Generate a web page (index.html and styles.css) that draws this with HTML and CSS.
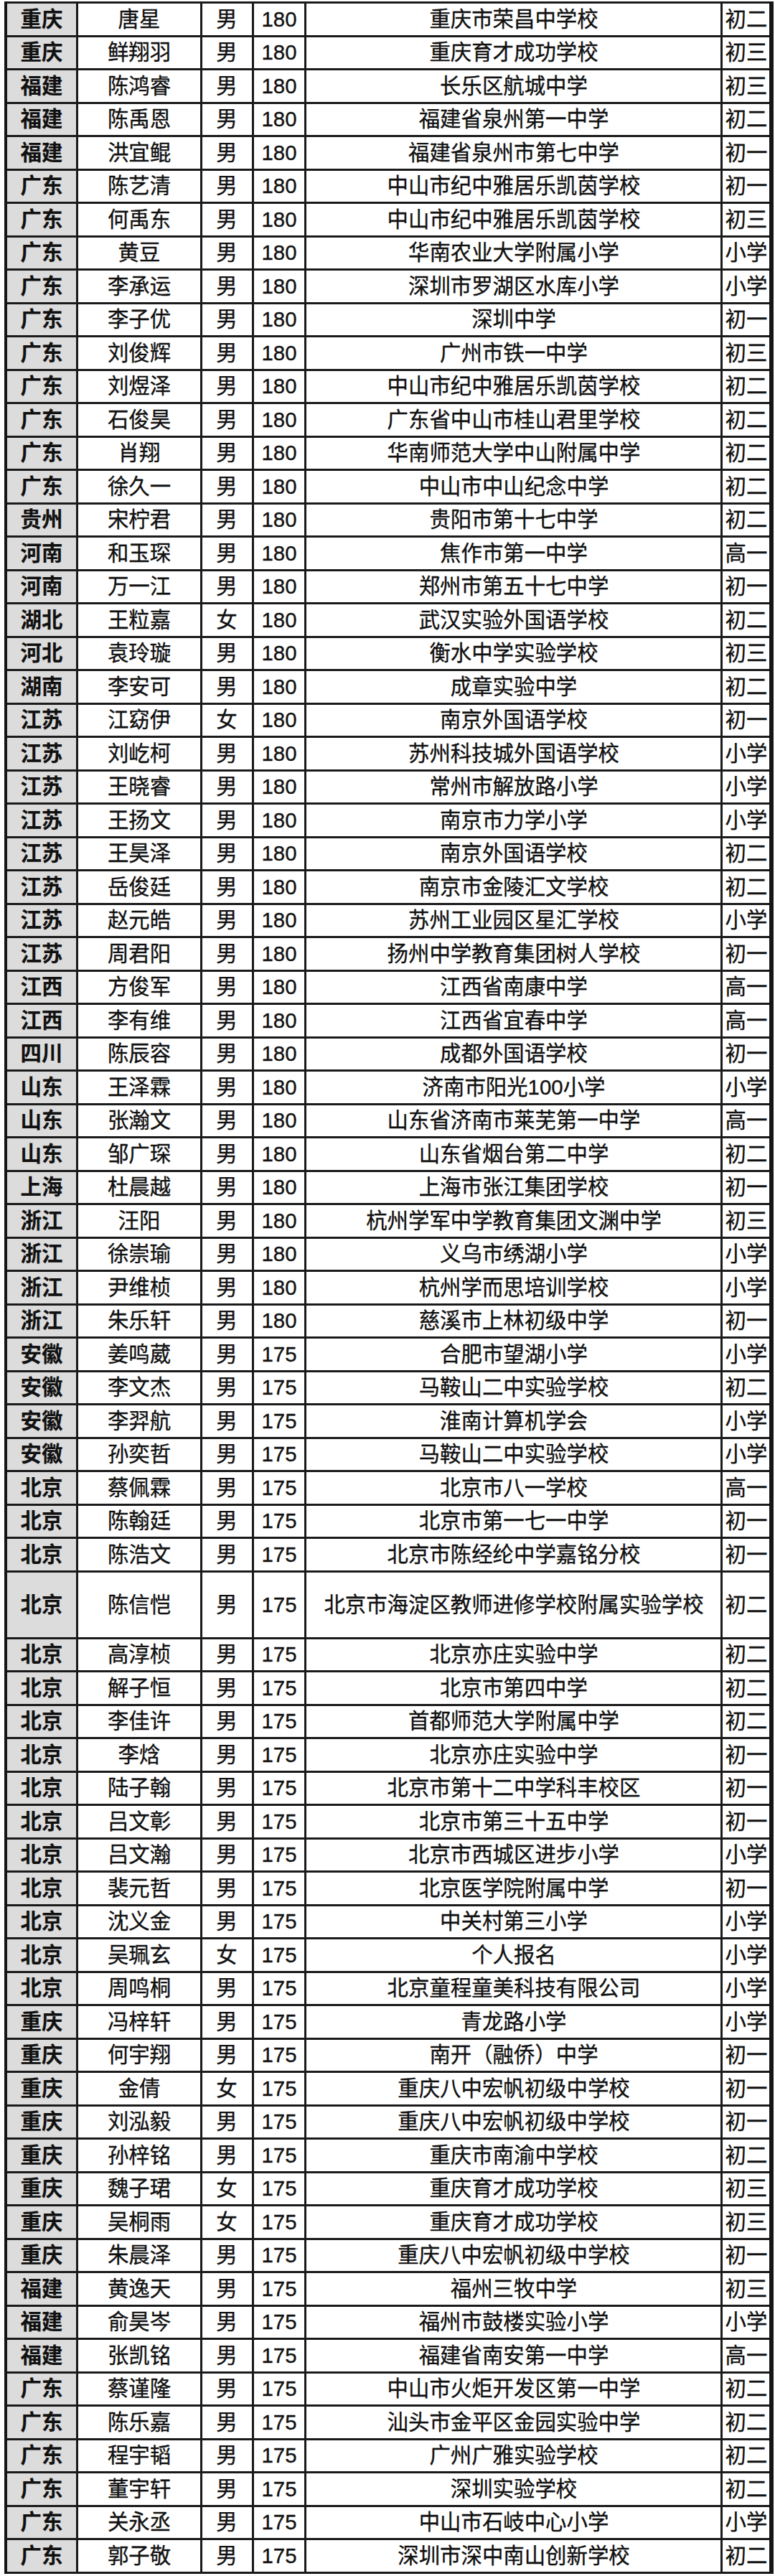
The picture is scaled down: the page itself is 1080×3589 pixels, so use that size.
FILE: index.html
```html
<!DOCTYPE html>
<html lang="zh-CN">
<head>
<meta charset="utf-8">
<title>成绩名单</title>
<link rel="stylesheet" href="styles.css">
</head>
<body>
<table class="rank">
<colgroup>
<col class="c-prov"><col class="c-name"><col class="c-sex"><col class="c-score"><col class="c-school"><col class="c-grade">
</colgroup>
<tbody>
<tr><td class="prov"><span class="t">重庆</span></td><td><span class="t">唐星</span></td><td><span class="t">男</span></td><td><span class="t">180</span></td><td><span class="t">重庆市荣昌中学校</span></td><td><span class="t">初二</span></td></tr>
<tr><td class="prov"><span class="t">重庆</span></td><td><span class="t">鲜翔羽</span></td><td><span class="t">男</span></td><td><span class="t">180</span></td><td><span class="t">重庆育才成功学校</span></td><td><span class="t">初三</span></td></tr>
<tr><td class="prov"><span class="t">福建</span></td><td><span class="t">陈鸿睿</span></td><td><span class="t">男</span></td><td><span class="t">180</span></td><td><span class="t">长乐区航城中学</span></td><td><span class="t">初三</span></td></tr>
<tr><td class="prov"><span class="t">福建</span></td><td><span class="t">陈禹恩</span></td><td><span class="t">男</span></td><td><span class="t">180</span></td><td><span class="t">福建省泉州第一中学</span></td><td><span class="t">初二</span></td></tr>
<tr><td class="prov"><span class="t">福建</span></td><td><span class="t">洪宜鲲</span></td><td><span class="t">男</span></td><td><span class="t">180</span></td><td><span class="t">福建省泉州市第七中学</span></td><td><span class="t">初一</span></td></tr>
<tr><td class="prov"><span class="t">广东</span></td><td><span class="t">陈艺清</span></td><td><span class="t">男</span></td><td><span class="t">180</span></td><td><span class="t">中山市纪中雅居乐凯茵学校</span></td><td><span class="t">初一</span></td></tr>
<tr><td class="prov"><span class="t">广东</span></td><td><span class="t">何禹东</span></td><td><span class="t">男</span></td><td><span class="t">180</span></td><td><span class="t">中山市纪中雅居乐凯茵学校</span></td><td><span class="t">初三</span></td></tr>
<tr><td class="prov"><span class="t">广东</span></td><td><span class="t">黄豆</span></td><td><span class="t">男</span></td><td><span class="t">180</span></td><td><span class="t">华南农业大学附属小学</span></td><td><span class="t">小学</span></td></tr>
<tr><td class="prov"><span class="t">广东</span></td><td><span class="t">李承运</span></td><td><span class="t">男</span></td><td><span class="t">180</span></td><td><span class="t">深圳市罗湖区水库小学</span></td><td><span class="t">小学</span></td></tr>
<tr><td class="prov"><span class="t">广东</span></td><td><span class="t">李子优</span></td><td><span class="t">男</span></td><td><span class="t">180</span></td><td><span class="t">深圳中学</span></td><td><span class="t">初一</span></td></tr>
<tr><td class="prov"><span class="t">广东</span></td><td><span class="t">刘俊辉</span></td><td><span class="t">男</span></td><td><span class="t">180</span></td><td><span class="t">广州市铁一中学</span></td><td><span class="t">初三</span></td></tr>
<tr><td class="prov"><span class="t">广东</span></td><td><span class="t">刘煜泽</span></td><td><span class="t">男</span></td><td><span class="t">180</span></td><td><span class="t">中山市纪中雅居乐凯茵学校</span></td><td><span class="t">初二</span></td></tr>
<tr><td class="prov"><span class="t">广东</span></td><td><span class="t">石俊昊</span></td><td><span class="t">男</span></td><td><span class="t">180</span></td><td><span class="t">广东省中山市桂山君里学校</span></td><td><span class="t">初二</span></td></tr>
<tr><td class="prov"><span class="t">广东</span></td><td><span class="t">肖翔</span></td><td><span class="t">男</span></td><td><span class="t">180</span></td><td><span class="t">华南师范大学中山附属中学</span></td><td><span class="t">初二</span></td></tr>
<tr><td class="prov"><span class="t">广东</span></td><td><span class="t">徐久一</span></td><td><span class="t">男</span></td><td><span class="t">180</span></td><td><span class="t">中山市中山纪念中学</span></td><td><span class="t">初二</span></td></tr>
<tr><td class="prov"><span class="t">贵州</span></td><td><span class="t">宋柠君</span></td><td><span class="t">男</span></td><td><span class="t">180</span></td><td><span class="t">贵阳市第十七中学</span></td><td><span class="t">初二</span></td></tr>
<tr><td class="prov"><span class="t">河南</span></td><td><span class="t">和玉琛</span></td><td><span class="t">男</span></td><td><span class="t">180</span></td><td><span class="t">焦作市第一中学</span></td><td><span class="t">高一</span></td></tr>
<tr><td class="prov"><span class="t">河南</span></td><td><span class="t">万一江</span></td><td><span class="t">男</span></td><td><span class="t">180</span></td><td><span class="t">郑州市第五十七中学</span></td><td><span class="t">初一</span></td></tr>
<tr><td class="prov"><span class="t">湖北</span></td><td><span class="t">王粒嘉</span></td><td><span class="t">女</span></td><td><span class="t">180</span></td><td><span class="t">武汉实验外国语学校</span></td><td><span class="t">初二</span></td></tr>
<tr><td class="prov"><span class="t">河北</span></td><td><span class="t">袁玲璇</span></td><td><span class="t">男</span></td><td><span class="t">180</span></td><td><span class="t">衡水中学实验学校</span></td><td><span class="t">初三</span></td></tr>
<tr><td class="prov"><span class="t">湖南</span></td><td><span class="t">李安可</span></td><td><span class="t">男</span></td><td><span class="t">180</span></td><td><span class="t">成章实验中学</span></td><td><span class="t">初二</span></td></tr>
<tr><td class="prov"><span class="t">江苏</span></td><td><span class="t">江窈伊</span></td><td><span class="t">女</span></td><td><span class="t">180</span></td><td><span class="t">南京外国语学校</span></td><td><span class="t">初一</span></td></tr>
<tr><td class="prov"><span class="t">江苏</span></td><td><span class="t">刘屹柯</span></td><td><span class="t">男</span></td><td><span class="t">180</span></td><td><span class="t">苏州科技城外国语学校</span></td><td><span class="t">小学</span></td></tr>
<tr><td class="prov"><span class="t">江苏</span></td><td><span class="t">王晓睿</span></td><td><span class="t">男</span></td><td><span class="t">180</span></td><td><span class="t">常州市解放路小学</span></td><td><span class="t">小学</span></td></tr>
<tr><td class="prov"><span class="t">江苏</span></td><td><span class="t">王扬文</span></td><td><span class="t">男</span></td><td><span class="t">180</span></td><td><span class="t">南京市力学小学</span></td><td><span class="t">小学</span></td></tr>
<tr><td class="prov"><span class="t">江苏</span></td><td><span class="t">王昊泽</span></td><td><span class="t">男</span></td><td><span class="t">180</span></td><td><span class="t">南京外国语学校</span></td><td><span class="t">初二</span></td></tr>
<tr><td class="prov"><span class="t">江苏</span></td><td><span class="t">岳俊廷</span></td><td><span class="t">男</span></td><td><span class="t">180</span></td><td><span class="t">南京市金陵汇文学校</span></td><td><span class="t">初二</span></td></tr>
<tr><td class="prov"><span class="t">江苏</span></td><td><span class="t">赵元皓</span></td><td><span class="t">男</span></td><td><span class="t">180</span></td><td><span class="t">苏州工业园区星汇学校</span></td><td><span class="t">小学</span></td></tr>
<tr><td class="prov"><span class="t">江苏</span></td><td><span class="t">周君阳</span></td><td><span class="t">男</span></td><td><span class="t">180</span></td><td><span class="t">扬州中学教育集团树人学校</span></td><td><span class="t">初一</span></td></tr>
<tr><td class="prov"><span class="t">江西</span></td><td><span class="t">方俊军</span></td><td><span class="t">男</span></td><td><span class="t">180</span></td><td><span class="t">江西省南康中学</span></td><td><span class="t">高一</span></td></tr>
<tr><td class="prov"><span class="t">江西</span></td><td><span class="t">李有维</span></td><td><span class="t">男</span></td><td><span class="t">180</span></td><td><span class="t">江西省宜春中学</span></td><td><span class="t">高一</span></td></tr>
<tr><td class="prov"><span class="t">四川</span></td><td><span class="t">陈辰容</span></td><td><span class="t">男</span></td><td><span class="t">180</span></td><td><span class="t">成都外国语学校</span></td><td><span class="t">初一</span></td></tr>
<tr><td class="prov"><span class="t">山东</span></td><td><span class="t">王泽霖</span></td><td><span class="t">男</span></td><td><span class="t">180</span></td><td><span class="t">济南市阳光100小学</span></td><td><span class="t">小学</span></td></tr>
<tr><td class="prov"><span class="t">山东</span></td><td><span class="t">张瀚文</span></td><td><span class="t">男</span></td><td><span class="t">180</span></td><td><span class="t">山东省济南市莱芜第一中学</span></td><td><span class="t">高一</span></td></tr>
<tr><td class="prov"><span class="t">山东</span></td><td><span class="t">邹广琛</span></td><td><span class="t">男</span></td><td><span class="t">180</span></td><td><span class="t">山东省烟台第二中学</span></td><td><span class="t">初二</span></td></tr>
<tr><td class="prov"><span class="t">上海</span></td><td><span class="t">杜晨越</span></td><td><span class="t">男</span></td><td><span class="t">180</span></td><td><span class="t">上海市张江集团学校</span></td><td><span class="t">初一</span></td></tr>
<tr><td class="prov"><span class="t">浙江</span></td><td><span class="t">汪阳</span></td><td><span class="t">男</span></td><td><span class="t">180</span></td><td><span class="t">杭州学军中学教育集团文渊中学</span></td><td><span class="t">初三</span></td></tr>
<tr><td class="prov"><span class="t">浙江</span></td><td><span class="t">徐崇瑜</span></td><td><span class="t">男</span></td><td><span class="t">180</span></td><td><span class="t">义乌市绣湖小学</span></td><td><span class="t">小学</span></td></tr>
<tr><td class="prov"><span class="t">浙江</span></td><td><span class="t">尹维桢</span></td><td><span class="t">男</span></td><td><span class="t">180</span></td><td><span class="t">杭州学而思培训学校</span></td><td><span class="t">小学</span></td></tr>
<tr><td class="prov"><span class="t">浙江</span></td><td><span class="t">朱乐轩</span></td><td><span class="t">男</span></td><td><span class="t">180</span></td><td><span class="t">慈溪市上林初级中学</span></td><td><span class="t">初一</span></td></tr>
<tr><td class="prov"><span class="t">安徽</span></td><td><span class="t">姜鸣葳</span></td><td><span class="t">男</span></td><td><span class="t">175</span></td><td><span class="t">合肥市望湖小学</span></td><td><span class="t">小学</span></td></tr>
<tr><td class="prov"><span class="t">安徽</span></td><td><span class="t">李文杰</span></td><td><span class="t">男</span></td><td><span class="t">175</span></td><td><span class="t">马鞍山二中实验学校</span></td><td><span class="t">初二</span></td></tr>
<tr><td class="prov"><span class="t">安徽</span></td><td><span class="t">李羿航</span></td><td><span class="t">男</span></td><td><span class="t">175</span></td><td><span class="t">淮南计算机学会</span></td><td><span class="t">小学</span></td></tr>
<tr><td class="prov"><span class="t">安徽</span></td><td><span class="t">孙奕哲</span></td><td><span class="t">男</span></td><td><span class="t">175</span></td><td><span class="t">马鞍山二中实验学校</span></td><td><span class="t">小学</span></td></tr>
<tr><td class="prov"><span class="t">北京</span></td><td><span class="t">蔡佩霖</span></td><td><span class="t">男</span></td><td><span class="t">175</span></td><td><span class="t">北京市八一学校</span></td><td><span class="t">高一</span></td></tr>
<tr><td class="prov"><span class="t">北京</span></td><td><span class="t">陈翰廷</span></td><td><span class="t">男</span></td><td><span class="t">175</span></td><td><span class="t">北京市第一七一中学</span></td><td><span class="t">初一</span></td></tr>
<tr><td class="prov"><span class="t">北京</span></td><td><span class="t">陈浩文</span></td><td><span class="t">男</span></td><td><span class="t">175</span></td><td><span class="t">北京市陈经纶中学嘉铭分校</span></td><td><span class="t">初一</span></td></tr>
<tr class="tall"><td class="prov"><span class="t">北京</span></td><td><span class="t">陈信恺</span></td><td><span class="t">男</span></td><td><span class="t">175</span></td><td><span class="t">北京市海淀区教师进修学校附属实验学校</span></td><td><span class="t">初二</span></td></tr>
<tr><td class="prov"><span class="t">北京</span></td><td><span class="t">高淳桢</span></td><td><span class="t">男</span></td><td><span class="t">175</span></td><td><span class="t">北京亦庄实验中学</span></td><td><span class="t">初二</span></td></tr>
<tr><td class="prov"><span class="t">北京</span></td><td><span class="t">解子恒</span></td><td><span class="t">男</span></td><td><span class="t">175</span></td><td><span class="t">北京市第四中学</span></td><td><span class="t">初二</span></td></tr>
<tr><td class="prov"><span class="t">北京</span></td><td><span class="t">李佳许</span></td><td><span class="t">男</span></td><td><span class="t">175</span></td><td><span class="t">首都师范大学附属中学</span></td><td><span class="t">初二</span></td></tr>
<tr><td class="prov"><span class="t">北京</span></td><td><span class="t">李焓</span></td><td><span class="t">男</span></td><td><span class="t">175</span></td><td><span class="t">北京亦庄实验中学</span></td><td><span class="t">初一</span></td></tr>
<tr><td class="prov"><span class="t">北京</span></td><td><span class="t">陆子翰</span></td><td><span class="t">男</span></td><td><span class="t">175</span></td><td><span class="t">北京市第十二中学科丰校区</span></td><td><span class="t">初一</span></td></tr>
<tr><td class="prov"><span class="t">北京</span></td><td><span class="t">吕文彰</span></td><td><span class="t">男</span></td><td><span class="t">175</span></td><td><span class="t">北京市第三十五中学</span></td><td><span class="t">初一</span></td></tr>
<tr><td class="prov"><span class="t">北京</span></td><td><span class="t">吕文瀚</span></td><td><span class="t">男</span></td><td><span class="t">175</span></td><td><span class="t">北京市西城区进步小学</span></td><td><span class="t">小学</span></td></tr>
<tr><td class="prov"><span class="t">北京</span></td><td><span class="t">裴元哲</span></td><td><span class="t">男</span></td><td><span class="t">175</span></td><td><span class="t">北京医学院附属中学</span></td><td><span class="t">初一</span></td></tr>
<tr><td class="prov"><span class="t">北京</span></td><td><span class="t">沈义金</span></td><td><span class="t">男</span></td><td><span class="t">175</span></td><td><span class="t">中关村第三小学</span></td><td><span class="t">小学</span></td></tr>
<tr><td class="prov"><span class="t">北京</span></td><td><span class="t">吴珮玄</span></td><td><span class="t">女</span></td><td><span class="t">175</span></td><td><span class="t">个人报名</span></td><td><span class="t">小学</span></td></tr>
<tr><td class="prov"><span class="t">北京</span></td><td><span class="t">周鸣桐</span></td><td><span class="t">男</span></td><td><span class="t">175</span></td><td><span class="t">北京童程童美科技有限公司</span></td><td><span class="t">小学</span></td></tr>
<tr><td class="prov"><span class="t">重庆</span></td><td><span class="t">冯梓轩</span></td><td><span class="t">男</span></td><td><span class="t">175</span></td><td><span class="t">青龙路小学</span></td><td><span class="t">小学</span></td></tr>
<tr><td class="prov"><span class="t">重庆</span></td><td><span class="t">何宇翔</span></td><td><span class="t">男</span></td><td><span class="t">175</span></td><td><span class="t">南开（融侨）中学</span></td><td><span class="t">初一</span></td></tr>
<tr><td class="prov"><span class="t">重庆</span></td><td><span class="t">金倩</span></td><td><span class="t">女</span></td><td><span class="t">175</span></td><td><span class="t">重庆八中宏帆初级中学校</span></td><td><span class="t">初一</span></td></tr>
<tr><td class="prov"><span class="t">重庆</span></td><td><span class="t">刘泓毅</span></td><td><span class="t">男</span></td><td><span class="t">175</span></td><td><span class="t">重庆八中宏帆初级中学校</span></td><td><span class="t">初一</span></td></tr>
<tr><td class="prov"><span class="t">重庆</span></td><td><span class="t">孙梓铭</span></td><td><span class="t">男</span></td><td><span class="t">175</span></td><td><span class="t">重庆市南渝中学校</span></td><td><span class="t">初二</span></td></tr>
<tr><td class="prov"><span class="t">重庆</span></td><td><span class="t">魏子珺</span></td><td><span class="t">女</span></td><td><span class="t">175</span></td><td><span class="t">重庆育才成功学校</span></td><td><span class="t">初三</span></td></tr>
<tr><td class="prov"><span class="t">重庆</span></td><td><span class="t">吴桐雨</span></td><td><span class="t">女</span></td><td><span class="t">175</span></td><td><span class="t">重庆育才成功学校</span></td><td><span class="t">初三</span></td></tr>
<tr><td class="prov"><span class="t">重庆</span></td><td><span class="t">朱晨泽</span></td><td><span class="t">男</span></td><td><span class="t">175</span></td><td><span class="t">重庆八中宏帆初级中学校</span></td><td><span class="t">初一</span></td></tr>
<tr><td class="prov"><span class="t">福建</span></td><td><span class="t">黄逸天</span></td><td><span class="t">男</span></td><td><span class="t">175</span></td><td><span class="t">福州三牧中学</span></td><td><span class="t">初三</span></td></tr>
<tr><td class="prov"><span class="t">福建</span></td><td><span class="t">俞昊岑</span></td><td><span class="t">男</span></td><td><span class="t">175</span></td><td><span class="t">福州市鼓楼实验小学</span></td><td><span class="t">小学</span></td></tr>
<tr><td class="prov"><span class="t">福建</span></td><td><span class="t">张凯铭</span></td><td><span class="t">男</span></td><td><span class="t">175</span></td><td><span class="t">福建省南安第一中学</span></td><td><span class="t">高一</span></td></tr>
<tr><td class="prov"><span class="t">广东</span></td><td><span class="t">蔡谨隆</span></td><td><span class="t">男</span></td><td><span class="t">175</span></td><td><span class="t">中山市火炬开发区第一中学</span></td><td><span class="t">初二</span></td></tr>
<tr><td class="prov"><span class="t">广东</span></td><td><span class="t">陈乐嘉</span></td><td><span class="t">男</span></td><td><span class="t">175</span></td><td><span class="t">汕头市金平区金园实验中学</span></td><td><span class="t">初二</span></td></tr>
<tr><td class="prov"><span class="t">广东</span></td><td><span class="t">程宇韬</span></td><td><span class="t">男</span></td><td><span class="t">175</span></td><td><span class="t">广州广雅实验学校</span></td><td><span class="t">初二</span></td></tr>
<tr><td class="prov"><span class="t">广东</span></td><td><span class="t">董宇轩</span></td><td><span class="t">男</span></td><td><span class="t">175</span></td><td><span class="t">深圳实验学校</span></td><td><span class="t">初二</span></td></tr>
<tr><td class="prov"><span class="t">广东</span></td><td><span class="t">关永丞</span></td><td><span class="t">男</span></td><td><span class="t">175</span></td><td><span class="t">中山市石岐中心小学</span></td><td><span class="t">小学</span></td></tr>
<tr><td class="prov"><span class="t">广东</span></td><td><span class="t">郭子敬</span></td><td><span class="t">男</span></td><td><span class="t">175</span></td><td><span class="t">深圳市深中南山创新学校</span></td><td><span class="t">初二</span></td></tr>
</tbody>
</table>
</body>
</html>
```
FILE: styles.css
```css
html, body {
  margin: 0;
  padding: 0;
  background: #ffffff;
}

body {
  font-family: "Liberation Sans", "Noto Sans CJK SC", sans-serif;
  color: #111111;
}

.rank {
  border-collapse: collapse;
  table-layout: fixed;
  width: 1072px;
  margin: 2px 0 0 6px;
  border-left: 4px solid #151515;
  border-right: 6px solid #151515;
}

.c-prov { width: 99px; }
.c-name { width: 172px; }
.c-sex { width: 72px; }
.c-score { width: 73px; }
.c-school { width: 577px; }
.c-grade { width: 69px; }

.rank tr {
  height: 46.5px;
}

.rank tr.tall {
  height: 93px;
}

.rank td {
  border: 3px solid #1a1a1a;
  padding: 0;
  text-align: center;
  vertical-align: middle;
  font-size: 30px;
  line-height: 1;
  white-space: nowrap;
  overflow: hidden;
  background: #ffffff;
  -webkit-text-stroke: 0.35px #111111;
}

.rank td.prov {
  background: #dcdcdc;
  font-weight: bold;
  -webkit-text-stroke: 0.2px #111111;
}

.t {
  display: inline-block;
  transform: scaleX(0.98);
}
```
